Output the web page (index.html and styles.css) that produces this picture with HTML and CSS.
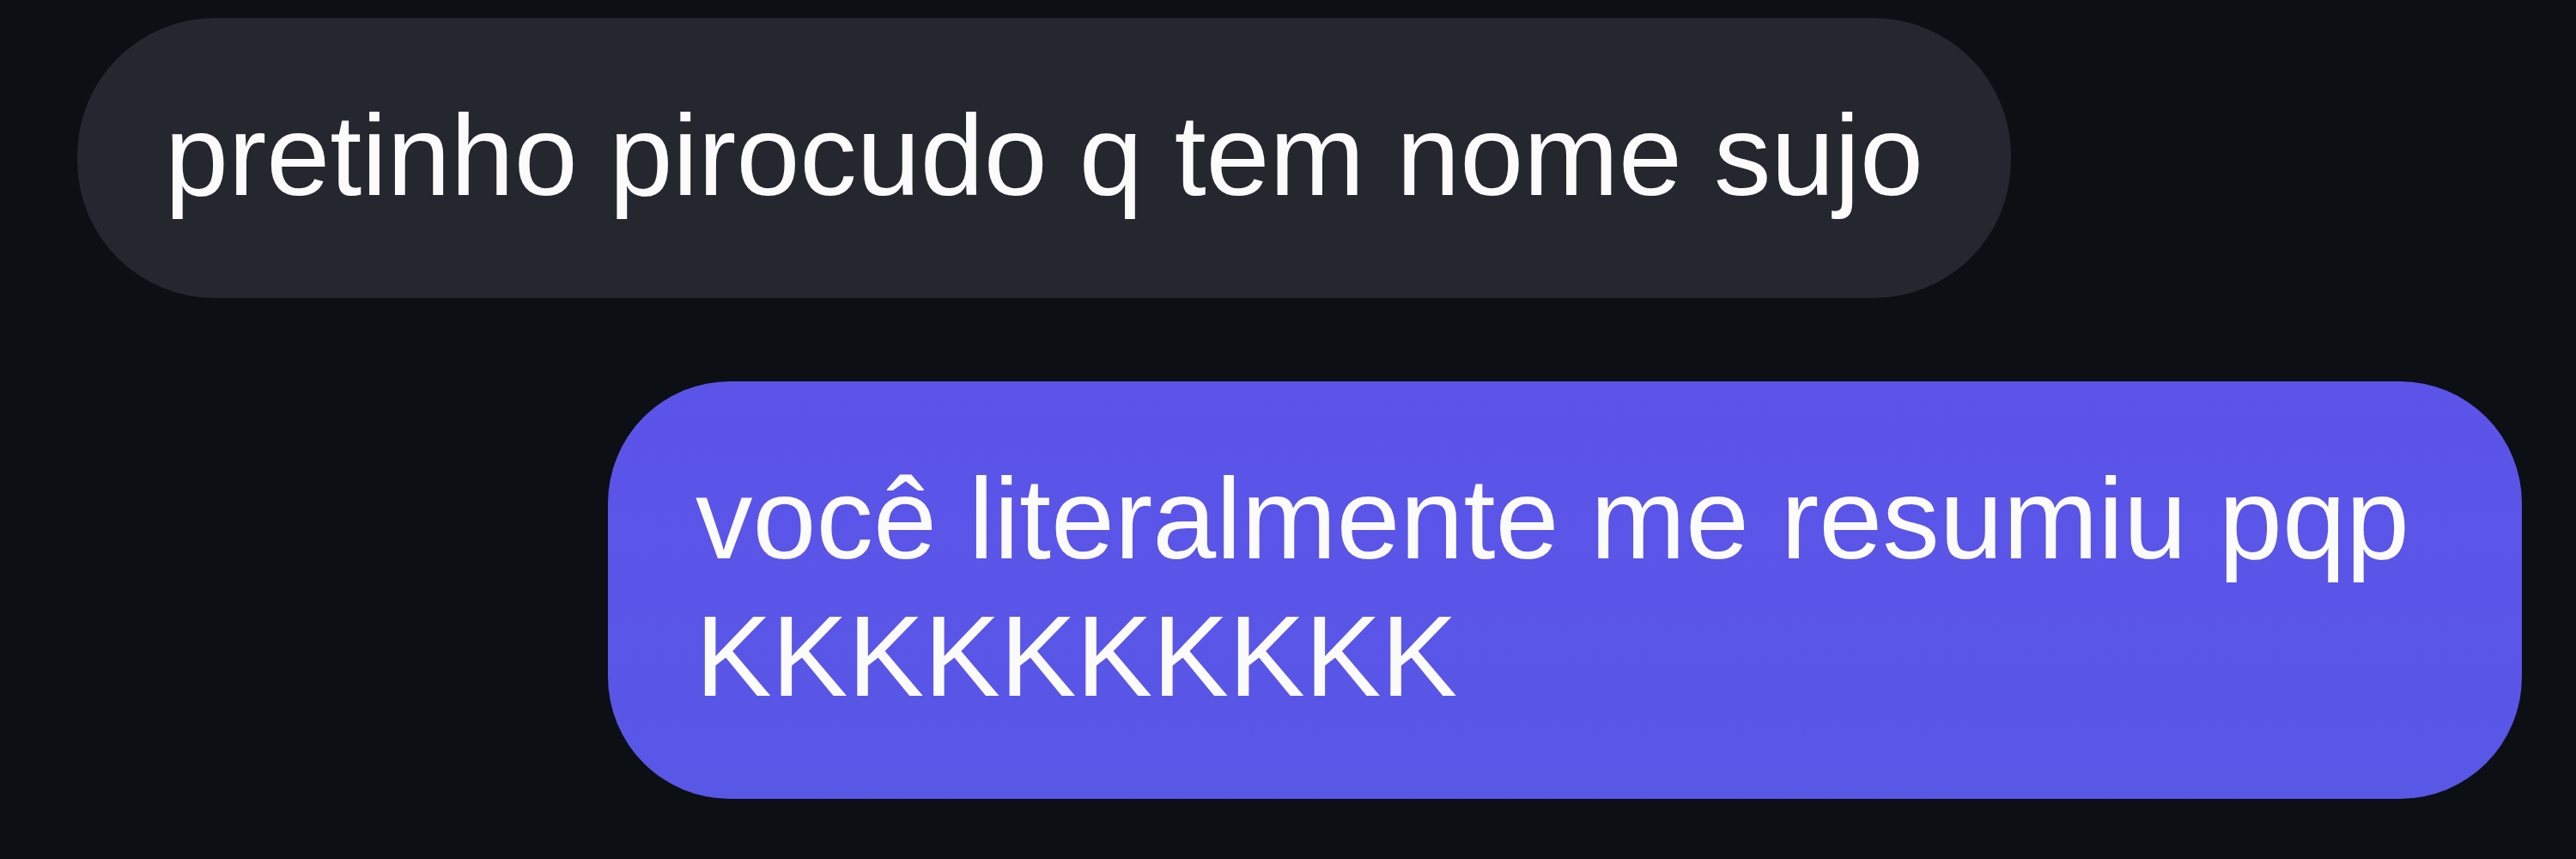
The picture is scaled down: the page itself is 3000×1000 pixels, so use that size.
FILE: index.html
```html
<!DOCTYPE html>
<html>
<head>
<meta charset="utf-8">
<link rel="stylesheet" href="styles.css">
</head>
<body>
<div class="chat">
  <div class="bubble bubble-in">pretinho pirocudo q tem nome sujo</div>
  <div class="bubble bubble-out">você literalmente me resumiu pqp KKKKKKKKKK</div>
</div>
</body>
</html>
```

FILE: styles.css
```css
html, body {
  margin: 0;
  background: #0c0f14;
}
.chat {
  display: flex;
  flex-direction: column;
  padding: 21px 63px 0 90px;
  gap: 97px;
  font-family: "Liberation Sans", Arial, sans-serif;
  font-size: 133px;
  line-height: 160px;
  color: #fbfbfb;
}
.bubble {
  box-sizing: border-box;
  padding: 80px 102px 86px;
}
.bubble-in {
  align-self: flex-start;
  background: #25272e;
  border-radius: 160px;
  white-space: nowrap;
}
.bubble-out {
  align-self: flex-end;
  max-width: 2229px;
  background: linear-gradient(#5c53e9, #5857e6);
  border-radius: 142px;
}
```
